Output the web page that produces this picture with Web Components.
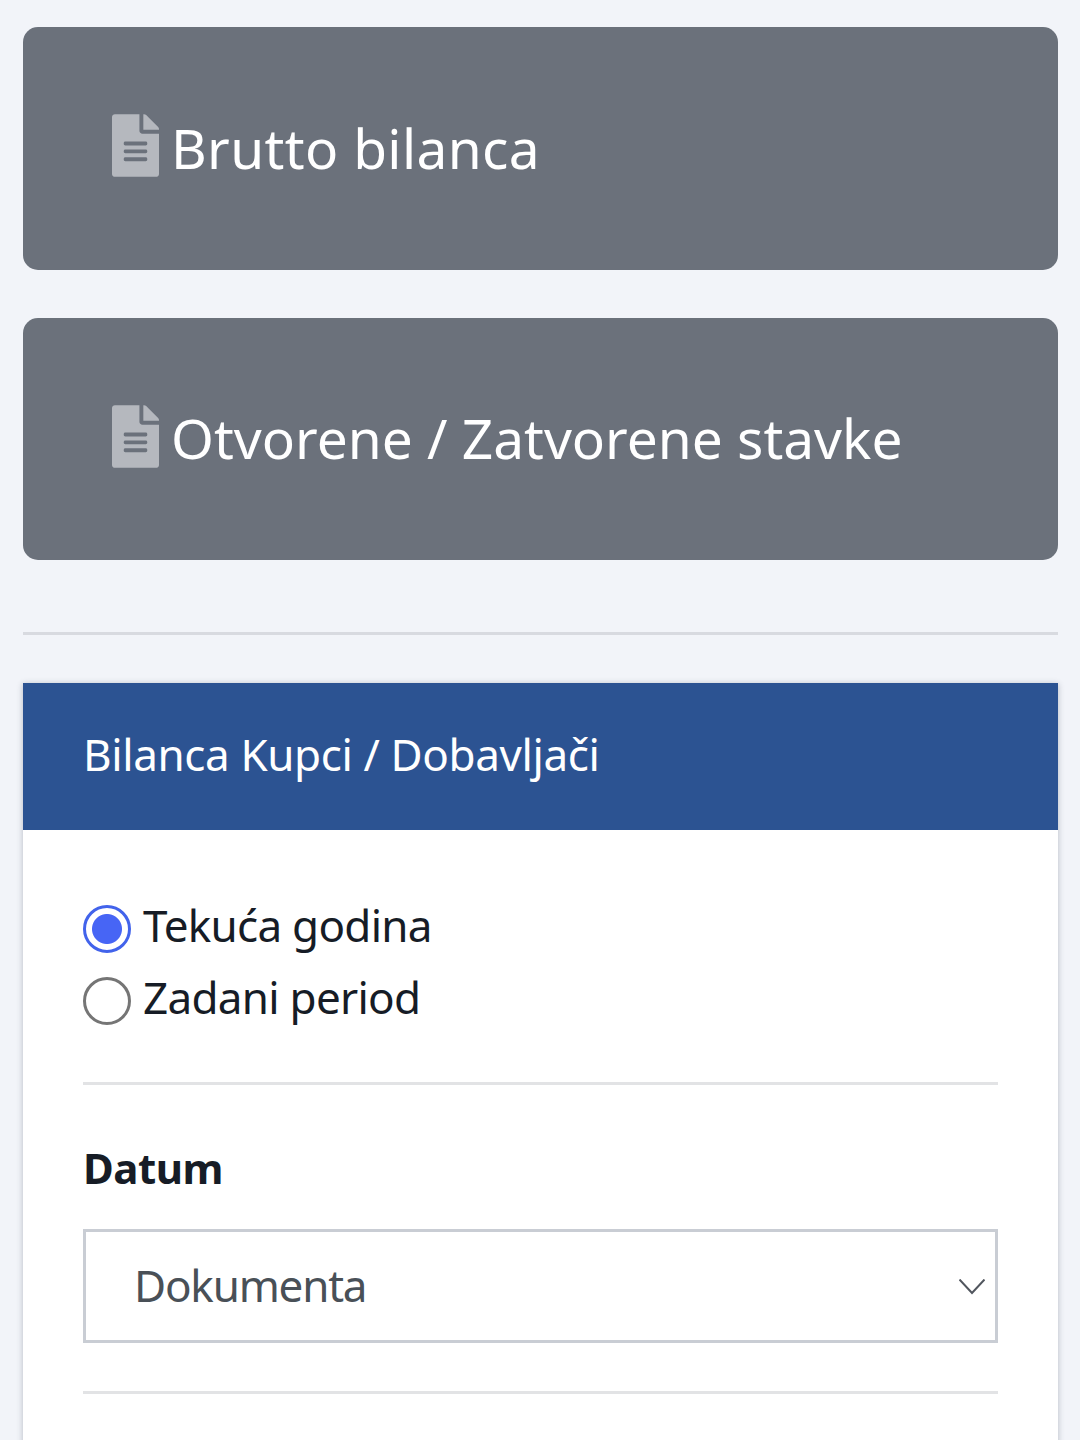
<!DOCTYPE html>
<html lang="hr"><head><meta charset="utf-8"><title>Izvještaji</title>
<style>
html,body{margin:0;height:1440px;overflow:hidden;background:#f2f4f9}
body{font-family:"Noto Sans",sans-serif;color:#161c26}
#page{display:flex;flex-direction:column;padding:27px 22px 0 23px}
</style></head><body>
<template id="t-btn"><style>
:host{display:flex;align-items:center;box-sizing:border-box;height:var(--h,243px);margin-bottom:48px;padding:0 0 0 89px;background:#6b717b;border-radius:15px;color:#fff;font-size:55px;letter-spacing:var(--ls,0)}
svg{width:47px;height:63px;margin:-6px 12px 0 0;fill:#b5b8be;flex:none}
span{margin-top:-3px}
</style><svg viewBox="0 0 384 512"><path d="M224 136V0H24C10.7 0 0 10.7 0 24v464c0 13.3 10.7 24 24 24h336c13.3 0 24-10.7 24-24V160H248c-13.2 0-24-10.8-24-24zm64 236c0 6.6-5.4 12-12 12H108c-6.6 0-12-5.4-12-12v-8c0-6.6 5.4-12 12-12h168c6.6 0 12 5.4 12 12v8zm0-64c0 6.6-5.4 12-12 12H108c-6.6 0-12-5.4-12-12v-8c0-6.6 5.4-12 12-12h168c6.6 0 12 5.4 12 12v8zm0-72v8c0 6.6-5.4 12-12 12H108c-6.6 0-12-5.4-12-12v-8c0-6.6 5.4-12 12-12h168c6.6 0 12 5.4 12 12zm96-114.1v6.1H256V0h6.1c6.4 0 12.5 2.5 17 7l97.9 98c4.5 4.5 7 10.6 7 16.9z"/></svg><span><slot></slot></span></template>
<template id="t-rule"><style>:host{display:block;height:3px;background:var(--c,#d8dae0);margin:var(--m,0)}</style></template>
<template id="t-card"><style>
:host{display:block;background:#fff;box-shadow:0 1px 6px rgba(40,50,70,.3);height:900px}
header{display:flex;align-items:center;box-sizing:border-box;height:147px;padding:0 0 6px 60px;background:#2c5392;color:#fff;font-size:44px;letter-spacing:-.38px}
.b{padding:63px 60px 0}
</style><header><slot name="title"></slot></header><div class="b"><slot></slot></div></template>
<template id="t-radio"><style>
:host{display:flex;align-items:center;height:72px;font-size:44px;letter-spacing:-.72px;color:#161c26}
i{box-sizing:border-box;flex:none;width:48px;height:48px;border-radius:50%;border:3px solid #757575;margin-right:12px;background:#fff}
:host([checked]) i{border-color:#4263eb;background:radial-gradient(circle,#4765f5 0 14.5px,#fff 15.5px)}
span{margin-top:-8px}
</style><i></i><span><slot></slot></span></template>
<template id="t-select"><style>
:host{display:flex;align-items:center;justify-content:space-between;box-sizing:border-box;height:114px;border:3px solid #c9cdd4;padding:0 10px 0 48px;font-size:44px;letter-spacing:-1.2px;color:#495057;background:#fff}
svg{width:26px;height:16px;margin-top:2px;fill:none;stroke:#51565e;stroke-width:2}
span{margin-top:-2px}
</style><span><slot></slot></span><svg viewBox="0 0 26 16"><path d="M.5.5L13 14 25.5.5"/></svg></template>
<template id="t-label"><style>:host{display:block;font-size:42px;font-weight:700;line-height:60px;letter-spacing:-.5px;color:#161c26;margin:53px 0 31px}</style><slot></slot></template>
<script>
function def(n,t){customElements.define(n,class extends HTMLElement{constructor(){super();this.attachShadow({mode:"open"}).appendChild(document.getElementById(t).content.cloneNode(true))}})}
def("report-button","t-btn");def("h-rule","t-rule");def("report-card","t-card");def("radio-row","t-radio");def("select-box","t-select");def("field-label","t-label");
</script>
<div id="page">
<report-button style="--ls:.35px">Brutto bilanca</report-button>
<report-button style="--h:242px">Otvorene / Zatvorene stavke</report-button>
<h-rule style="--m:24px 0 48px"></h-rule>
<report-card>
<span slot="title">Bilanca Kupci / Dobavljači</span>
<radio-row checked>Tekuća godina</radio-row>
<radio-row>Zadani period</radio-row>
<h-rule style="--m:45px 0 0;--c:#e2e3e5"></h-rule>
<field-label>Datum</field-label>
<select-box>Dokumenta</select-box>
<h-rule style="--m:48px 0 0;--c:#e2e3e5"></h-rule>
</report-card>
</div>
</body></html>
